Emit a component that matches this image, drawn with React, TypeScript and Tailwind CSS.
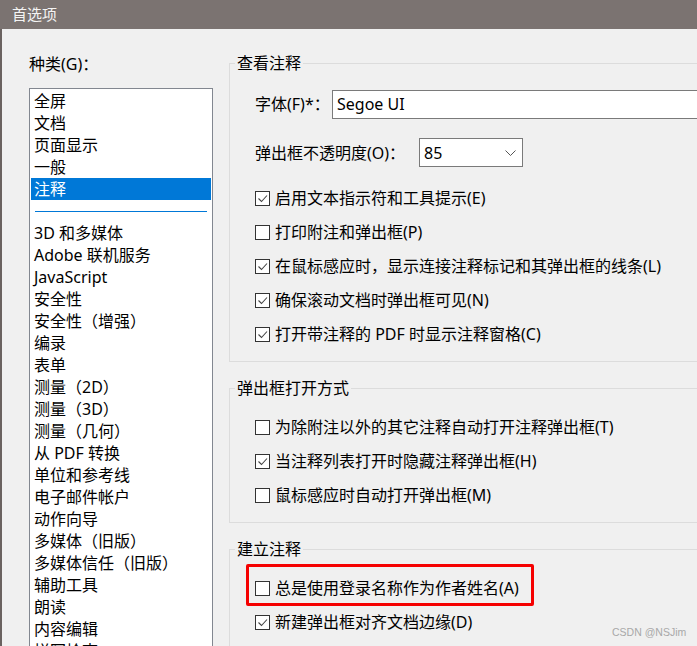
import React from "react";

const categories = [
  "3D 和多媒体",
  "Adobe 联机服务",
  "JavaScript",
  "安全性",
  "安全性（增强）",
  "编录",
  "表单",
  "测量（2D）",
  "测量（3D）",
  "测量（几何）",
  "从 PDF 转换",
  "单位和参考线",
  "电子邮件帐户",
  "动作向导",
  "多媒体（旧版）",
  "多媒体信任（旧版）",
  "辅助工具",
  "朗读",
  "内容编辑",
  "拼写检查",
];

function Check({ checked, label }: { checked?: boolean; label: string }) {
  return (
    <div className="flex h-[34px] items-center">
      <span className="flex h-[15px] w-[15px] shrink-0 items-center justify-center border border-[#333333] bg-white">
        {checked && (
          <svg width="13" height="13" viewBox="0 0 13 13" fill="none">
            <polyline points="2.5,6.5 5.5,9.5 11,3.5" stroke="#444" strokeWidth="1.1" />
          </svg>
        )}
      </span>
      <span className="ml-[5px] whitespace-nowrap">{label}</span>
    </div>
  );
}

function Group({ title, children }: { title: string; children: React.ReactNode }) {
  return (
    <fieldset className="w-[490px] border border-[#dcdcdc] p-0">
      <legend className="ml-[5px] px-[2px] leading-[22px]">{title}</legend>
      {children}
    </fieldset>
  );
}

export default function App() {
  return (
    <div className="relative flex h-[646px] w-[697px] flex-col overflow-hidden bg-[#f0f0f0] font-['Noto_Sans','Noto_Sans_CJK_SC',sans-serif] text-[16px] text-black">
      {/* Title bar */}
      <div className="flex h-[29px] shrink-0 items-center bg-[#7b7371] pl-[12px] text-[15px] text-[#f4f4f4]">首选项</div>

      <div className="flex flex-1 overflow-hidden">
        <div className="w-[2px] shrink-0 bg-[#6a6260]" />

        {/* Left: categories */}
        <div className="flex w-[227px] shrink-0 flex-col pl-[27px] pt-[24px]">
          <div className="leading-[22px]">种类(G)：</div>
          <div className="mt-[13px] w-[184px] flex-1 border border-[#828790] bg-white p-px leading-[22px]">
            {["全屏", "文档", "页面显示", "一般"].map((c) => (
              <div key={c} className="h-[22px] pl-[3px] whitespace-nowrap">{c}</div>
            ))}
            <div className="h-[22px] bg-[#0078d7] pl-[3px] text-white">注释</div>
            <div className="flex h-[22px] items-center px-[4px]">
              <div className="h-px w-full bg-[#0078d7]" />
            </div>
            {categories.map((c) => (
              <div key={c} className="h-[22px] pl-[3px] whitespace-nowrap">{c}</div>
            ))}
          </div>
        </div>

        {/* Right: settings */}
        <div className="flex flex-1 flex-col gap-[15px] pt-[23px]">
          <Group title="查看注释">
            <div className="pb-[10px] pl-[25px] pt-[16px]">
              <div className="flex h-[28px] items-center">
                <span className="w-[77px] whitespace-nowrap">字体(F)*：</span>
                <div className="flex h-[29px] flex-1 items-center border border-[#7a7a7a] bg-white pl-[4px]">Segoe UI</div>
              </div>
              <div className="mt-[20px] flex h-[29px] items-center">
                <span className="w-[164px] whitespace-nowrap">弹出框不透明度(O)：</span>
                <div className="flex h-[29px] w-[104px] items-center justify-between border border-[#7a7a7a] bg-white pl-[4px] pr-[6px]">
                  <span>85</span>
                  <svg width="11" height="6" viewBox="0 0 11 6" fill="none">
                    <polyline points="0.5,0.5 5.5,5.5 10.5,0.5" stroke="#555" strokeWidth="1" />
                  </svg>
                </div>
              </div>
              <div className="mt-[14px]">
                <Check checked label="启用文本指示符和工具提示(E)" />
                <Check label="打印附注和弹出框(P)" />
                <Check checked label="在鼠标感应时，显示连接注释标记和其弹出框的线条(L)" />
                <Check checked label="确保滚动文档时弹出框可见(N)" />
                <Check checked label="打开带注释的 PDF 时显示注释窗格(C)" />
              </div>
            </div>
          </Group>

          <Group title="弹出框打开方式">
            <div className="pb-[10px] pl-[25px] pt-[11px]">
              <Check label="为除附注以外的其它注释自动打开注释弹出框(T)" />
              <Check checked label="当注释列表打开时隐藏注释弹出框(H)" />
              <Check label="鼠标感应时自动打开弹出框(M)" />
            </div>
          </Group>

          <Group title="建立注释">
            <div className="pb-[10px] pl-[25px] pt-[11px]">
              <div className="relative">
                <Check label="总是使用登录名称作为作者姓名(A)" />
                <div className="pointer-events-none absolute left-[-9px] top-[-7px] h-[42px] w-[288px] rounded-[2px] border-[3px] border-[#f50000]" />
              </div>
              <Check checked label="新建弹出框对齐文档边缘(D)" />
            </div>
          </Group>
        </div>
      </div>

      <div className="absolute left-[612px] top-[625px] font-['Liberation_Sans',sans-serif] text-[10.5px] text-[#a8a8a8]">CSDN @NSJim</div>
    </div>
  );
}
